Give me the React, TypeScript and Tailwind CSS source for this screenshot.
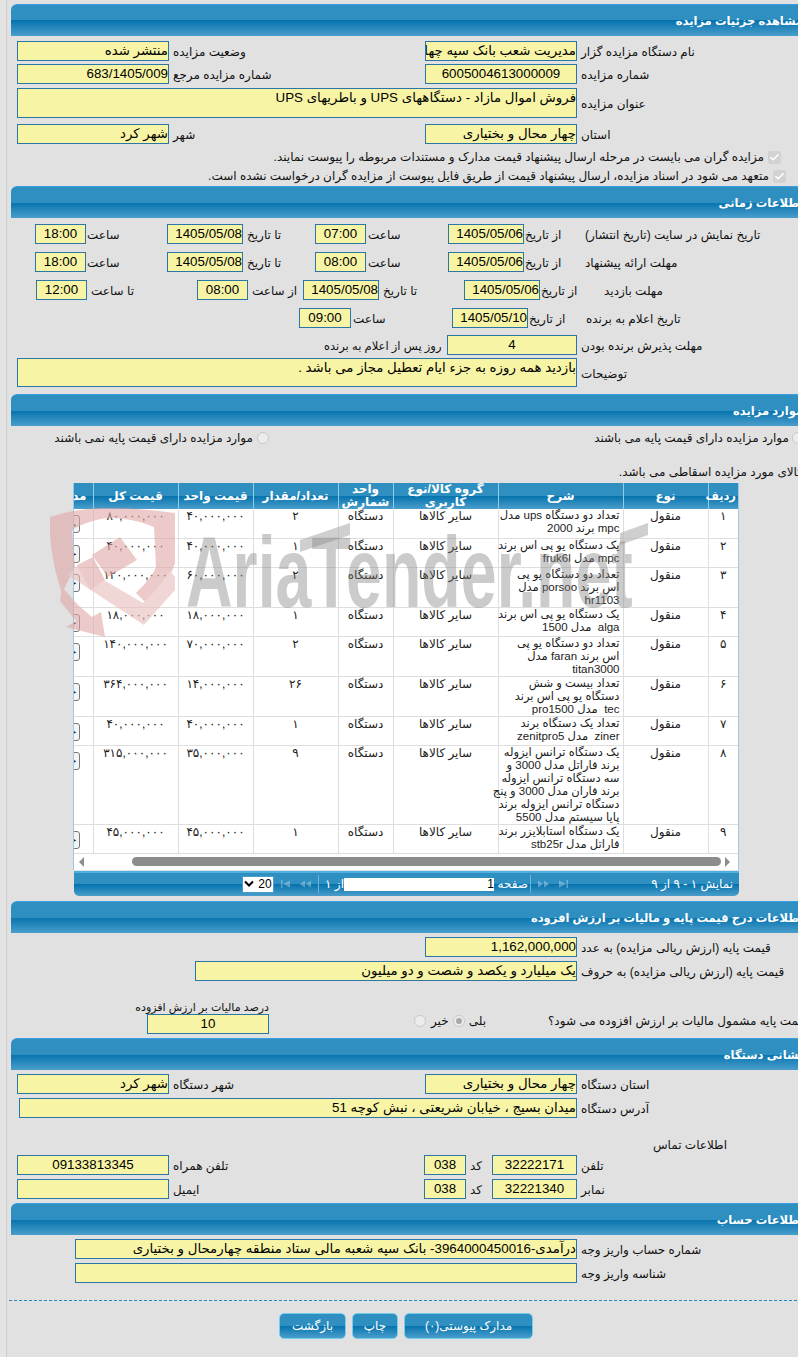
import { Check } from "lucide-react";
import type { ReactNode } from "react";

const barBg = "bg-[linear-gradient(#2f8fc1_0%,#2f8fc1_50%,#0673ae_50%,#4a9ecb_100%)]";

interface ItemRow {
  no: string;
  desc: string[];
  qty: string;
  unitPrice: string;
  total: string;
  height: string;
}

const items: ItemRow[] = [
  { no: "۱", desc: ["تعداد دو دستگاه ups مدل", "mpc برند 2000"], qty: "۲", unitPrice: "۴۰,۰۰۰,۰۰۰", total: "۸۰,۰۰۰,۰۰۰", height: "h-[29px]" },
  { no: "۲", desc: ["یک دستگاه یو پی اس برند", "mpc مدل fruk6l"], qty: "۱", unitPrice: "۴۰,۰۰۰,۰۰۰", total: "۴۰,۰۰۰,۰۰۰", height: "h-[29px]" },
  { no: "۳", desc: ["تعداد دو دستگاه یو پی", "اس برند porsoo مدل", "hr1103"], qty: "۲", unitPrice: "۶۰,۰۰۰,۰۰۰", total: "۱۲۰,۰۰۰,۰۰۰", height: "h-[40px]" },
  { no: "۴", desc: ["یک دستگاه یو پی اس برند", "alga  مدل 1500"], qty: "۱", unitPrice: "۱۸,۰۰۰,۰۰۰", total: "۱۸,۰۰۰,۰۰۰", height: "h-[29px]" },
  { no: "۵", desc: ["تعداد دو دستگاه یو پی", "اس برند faran مدل", "titan3000"], qty: "۲", unitPrice: "۷۰,۰۰۰,۰۰۰", total: "۱۴۰,۰۰۰,۰۰۰", height: "h-[40px]" },
  { no: "۶", desc: ["تعداد بیست و شش", "دستگاه یو پی اس برند", "tec  مدل pro1500"], qty: "۲۶", unitPrice: "۱۴,۰۰۰,۰۰۰", total: "۳۶۴,۰۰۰,۰۰۰", height: "h-[40px]" },
  { no: "۷", desc: ["تعداد یک دستگاه برند", "ziner  مدل zenitpro5"], qty: "۱", unitPrice: "۴۰,۰۰۰,۰۰۰", total: "۴۰,۰۰۰,۰۰۰", height: "h-[29px]" },
  {
    no: "۸",
    desc: [
      "یک دستگاه ترانس ایزوله",
      "برند فاراتل مدل 3000 و",
      "سه دستگاه ترانس ایزوله",
      "برند فاران مدل 3000 و پنج",
      "دستگاه ترانس ایزوله برند",
      "پایا سیستم مدل 5500",
    ],
    qty: "۹",
    unitPrice: "۳۵,۰۰۰,۰۰۰",
    total: "۳۱۵,۰۰۰,۰۰۰",
    height: "h-[79px]",
  },
  { no: "۹", desc: ["یک دستگاه استابلایزر برند", "فاراتل مدل stb25r"], qty: "۱", unitPrice: "۴۵,۰۰۰,۰۰۰", total: "۴۵,۰۰۰,۰۰۰", height: "h-[29px]" },
];

function SectionBar({ title }: { title: string }) {
  return (
    <div
      dir="rtl"
      className={`ml-[4px] h-[32px] shrink-0 rounded-t-[6px] border-t border-[#3b9ee0] ${barBg} flex items-center pr-[24px] pt-[3px] text-[11.5px] font-bold text-white`}
    >
      {title}
    </div>
  );
}

function Field({ children, className, center }: { children?: ReactNode; className: string; center?: boolean }) {
  return (
    <div
      dir="rtl"
      className={`h-[20px] shrink-0 overflow-hidden whitespace-nowrap border border-[#2a76a6] bg-[#f7f5a5] text-[13.33px] leading-[18px] text-black ${center ? "text-center" : "text-right"} ${className}`}
    >
      {children}
    </div>
  );
}

function Label({ children, className }: { children: ReactNode; className: string }) {
  return (
    <div dir="rtl" className={`h-[20px] shrink-0 whitespace-nowrap pl-[4px] pt-[2px] text-left text-[12px] leading-[18px] text-[#111] ${className}`}>
      {children}
    </div>
  );
}

function Radio({ checked }: { checked?: boolean }) {
  return (
    <span className="flex h-[12px] w-[12px] shrink-0 items-center justify-center rounded-full border border-[#c9c9c9] bg-[#ececec]">
      {checked && <span className="h-[6px] w-[6px] rounded-full bg-[#a8a8a8]" />}
    </span>
  );
}

function DisabledCheck() {
  return (
    <span className="flex h-[13px] w-[13px] shrink-0 items-center justify-center rounded-[2px] bg-[#d2d2d2]">
      <Check className="h-[11px] w-[11px] text-white" strokeWidth={3.5} />
    </span>
  );
}

function PagerIcon({ flip, double }: { flip?: boolean; double?: boolean }) {
  return (
    <svg width="12" height="8" viewBox="0 0 12 8" className={`shrink-0 opacity-40 ${flip ? "-scale-x-100" : ""}`}>
      {double ? (
        <path d="M0 4l5-3.5v7zM6 4l5-3.5v7z" fill="#cfe6f3" />
      ) : (
        <path d="M1 0h1.5v8H1zM3 4l7-3.5v7z" fill="#cfe6f3" />
      )}
    </svg>
  );
}

function Watermark() {
  return (
    <div className="pointer-events-none absolute left-[48px] top-[505px] h-[140px] w-[610px]">
      <svg width="610" height="140" viewBox="0 0 610 140" className="absolute left-0 top-0 opacity-60">
        {/* shield band */}
        <path
          d="M2 12C20 6 40 3 61 3C84 3 106 5 127 8L127 58C122 74 112 88 100 100L88 88C98 78 105 70 108 62L106 22C92 16 76 13 61 13C48 14 36 18 24 25L27 62L14 88C8 70 3 50 2 28Z"
          fill="#e2a8a8"
        />
        {/* arrow */}
        <path d="M14 82L30 100L44 112L53 107L57 132L18 122L28 116L12 96Z" fill="#e2a8a8" />
        {/* check */}
        <path d="M20 70L30 60L95 98L108 85L122 66L127 72L127 85L96 120Z" fill="#e8bcbc" />
        {/* fist blocks */}
        <path d="M29 60L45 52L57 75L42 85Z" fill="#e2a8a8" />
        <path d="M44 50L72 32L89 55L60 72Z" fill="#e2a8a8" />
        {/* slanted tops of the two T letters */}
        <path d="M252 35L302 18L302 30L252 47Z" fill="#b0b0b0" />
        <path d="M572 28L600 18L600 30L572 40Z" fill="#b0b0b0" />
      </svg>
      <div className="absolute left-[138px] top-[12px] origin-left scale-x-[0.645] whitespace-nowrap text-[100px] font-bold leading-[110px] text-[#808080] opacity-40">
        AriaTender.net
      </div>
    </div>
  );
}

function ItemsGrid() {
  const th = "border-l border-[#8fcbea] px-[2px] text-center align-middle text-[12px] font-bold leading-[13px] text-white";
  const td = "border-b border-l border-[#dedede] px-[2px] pt-[1px] text-center align-top text-[12px] leading-[13px] text-[#222]";
  return (
    <div className="ml-[66px] w-[666px] shrink-0 border-x border-[#9cc8e8] bg-white">
      <div dir="rtl" className="overflow-hidden">
        <table className="w-[725px] table-fixed border-collapse">
          <colgroup>
            <col className="w-[30px]" />
            <col className="w-[85px]" />
            <col className="w-[125px]" />
            <col className="w-[105px]" />
            <col className="w-[55px]" />
            <col className="w-[85px]" />
            <col className="w-[75px]" />
            <col className="w-[85px]" />
            <col className="w-[80px]" />
          </colgroup>
          <thead>
            <tr className={`h-[26px] ${barBg}`}>
              <th className={`${th} !text-[11.5px]`}>ردیف</th>
              <th className={th}>نوع</th>
              <th className={th}>شرح</th>
              <th className={th}>گروه کالا/نوع کاربری</th>
              <th className={th}>واحد شمارش</th>
              <th className={th}>تعداد/مقدار</th>
              <th className={th}>قیمت واحد</th>
              <th className={th}>قیمت کل</th>
              <th className={`${th} pr-[6px] text-right`}>مدارک</th>
            </tr>
          </thead>
          <tbody>
            {items.map((item) => (
              <tr key={item.no} className={item.height}>
                <td className={td}>{item.no}</td>
                <td className={td}>منقول</td>
                <td className={`${td} !pt-0 pr-[3px] text-right !text-[11.5px]`}>
                  {item.desc.map((line, i) => (
                    <div key={i} className="whitespace-pre">
                      {line}
                    </div>
                  ))}
                </td>
                <td className={td}>سایر کالاها</td>
                <td className={td}>دستگاه</td>
                <td className={td}>{item.qty}</td>
                <td className={td}>{item.unitPrice}</td>
                <td className={td}>{item.total}</td>
                <td className={`${td} pr-[13px]`}>
                  <button className="mt-[5px] block h-[18px] w-[60px] rounded-[3px] border border-[#777] bg-[#f4f4f4] text-right text-[11px] leading-[15px] text-[#222]">
                    <span className="pr-[2px]">جزئیات</span>
                  </button>
                </td>
              </tr>
            ))}
          </tbody>
        </table>
      </div>
      <div className="flex h-[16px] items-center bg-white pl-[5px]">
        <span className="h-0 w-0 border-y-[5px] border-r-[5px] border-y-transparent border-r-[#8c8c8c]" />
        <span className="ml-[48px] h-[9px] w-[589px] rounded-full bg-[#8c8c8c]" />
        <span className="ml-[4px] h-0 w-0 border-y-[5px] border-l-[5px] border-y-transparent border-l-[#8c8c8c]" />
      </div>
    </div>
  );
}

function Pager() {
  return (
    <div className={`ml-[67px] mt-[1px] flex h-[25px] w-[665px] shrink-0 items-center rounded-b-[5px] border-t-2 border-[#4fb0e0] ${barBg} text-[12px] text-white`}>
      <div className="ml-[168px] flex h-[17px] w-[32px] items-center justify-center gap-[4px] border border-[#4a9ecb] bg-white text-[12px] text-black">
        <svg width="10" height="8" viewBox="0 0 10 8" className="shrink-0">
          <path d="M1 1.5l4 4 4-4" fill="none" stroke="#000" strokeWidth="2" />
        </svg>
        <span>20</span>
      </div>
      <div className="ml-[6px] flex items-center gap-[8px]">
        <PagerIcon />
        <PagerIcon double />
      </div>
      <span className="ml-[6px] h-[18px] w-px bg-[#6fb3d6]" />
      <span dir="rtl" className="ml-[5px] w-[20px] whitespace-nowrap">
        از ۱
      </span>
      <div className="h-[13px] w-[150px] bg-white text-right text-[12px] leading-[13px] text-black">1</div>
      <span dir="rtl" className="ml-[4px] w-[30px] whitespace-nowrap">
        صفحه
      </span>
      <span className="ml-[2px] h-[18px] w-px bg-[#6fb3d6]" />
      <div className="ml-[6px] flex items-center gap-[8px]">
        <PagerIcon double flip />
        <PagerIcon flip />
      </div>
      <span dir="rtl" className="ml-auto mr-[6px] whitespace-nowrap">
        نمایش ۱ - ۹ از ۹
      </span>
    </div>
  );
}

function BarButton({ children, className }: { children: ReactNode; className: string }) {
  return (
    <button dir="rtl" className={`h-[26px] shrink-0 rounded-[5px] border border-[#75cdee] ${barBg} text-[12px] text-white ${className}`}>
      {children}
    </button>
  );
}

export default function App() {
  return (
    <div className="relative h-[1357px] w-[798px] overflow-hidden bg-[#e4e4e4] [font-family:'Liberation_Sans','DejaVu_Sans',sans-serif]">
      <div className="ml-[6px] flex h-full w-[821px] flex-col border-l border-[#cdcdcd] bg-[#e1e1e1] pt-[4px]">
        <SectionBar title="مشاهده جزئیات مزایده" />

        <div className="mt-[5px] flex">
          <Field className="ml-[10px] w-[152px]">منتشر شده</Field>
          <Label className="w-[256px]">وضعیت مزایده</Label>
          <Field className="w-[152px]">مدیریت شعب بانک سپه چهارمحال و بختیاری</Field>
          <Label className="w-[200px]">نام دستگاه مزایده گزار</Label>
        </div>
        <div className="mt-[3px] flex">
          <Field className="ml-[10px] w-[152px]">683/1405/009</Field>
          <Label className="w-[256px]">شماره مزایده مرجع</Label>
          <Field center className="w-[152px]">6005004613000009</Field>
          <Label className="w-[200px]">شماره مزایده</Label>
        </div>
        <div className="mt-[4px] flex">
          <Field className="ml-[10px] !h-[30px] w-[560px]">فروش اموال مازاد - دستگاههای UPS و باطریهای UPS</Field>
          <Label className="w-[200px] pt-[7px]">عنوان مزایده</Label>
        </div>
        <div className="mt-[6px] flex">
          <Field className="ml-[10px] w-[152px]">شهر کرد</Field>
          <Label className="w-[256px]">شهر</Label>
          <Field className="w-[152px]">چهار محال و بختیاری</Field>
          <Label className="w-[200px]">استان</Label>
        </div>
        <div dir="rtl" className="mt-[4px] flex h-[18px] items-center gap-[4px] pr-[46px] text-[12px] text-[#111]">
          <DisabledCheck />
          <span className="whitespace-nowrap">مزایده گران می بایست در مرحله ارسال پیشنهاد قیمت مدارک و مستندات مربوطه را پیوست نمایند.</span>
        </div>
        <div dir="rtl" className="mt-[1px] flex h-[18px] items-center gap-[4px] pr-[41px] text-[12px] text-[#111]">
          <DisabledCheck />
          <span className="whitespace-nowrap">متعهد می شود در اسناد مزایده، ارسال پیشنهاد قیمت از طریق فایل پیوست از مزایده گران درخواست نشده است.</span>
        </div>

        <div className="mt-[1px]">
          <SectionBar title="اطلاعات زمانی" />
        </div>
        <div className="mt-[6px] flex">
          <Field center className="ml-[28px] w-[51px]">18:00</Field>
          <Label className="w-[81px] !pl-[1px]">ساعت</Label>
          <Field className="w-[76px]">1405/05/08</Field>
          <Label className="w-[72px]">تا تاریخ</Label>
          <Field center className="w-[51px]">07:00</Field>
          <Label className="w-[82px] !pl-[2px]">ساعت</Label>
          <Field className="w-[76px]">1405/05/06</Field>
          <Label className="w-[57px] !pl-[1px]">از تاریخ</Label>
          <Label className="w-[200px]">تاریخ نمایش در سایت (تاریخ انتشار)</Label>
        </div>
        <div className="mt-[8px] flex">
          <Field center className="ml-[28px] w-[51px]">18:00</Field>
          <Label className="w-[81px] !pl-[1px]">ساعت</Label>
          <Field className="w-[76px]">1405/05/08</Field>
          <Label className="w-[72px]">تا تاریخ</Label>
          <Field center className="w-[51px]">08:00</Field>
          <Label className="w-[82px] !pl-[2px]">ساعت</Label>
          <Field className="w-[76px]">1405/05/06</Field>
          <Label className="w-[57px] !pl-[1px]">از تاریخ</Label>
          <Label className="w-[200px]">مهلت ارائه پیشنهاد</Label>
        </div>
        <div className="mt-[8px] flex">
          <Field center className="ml-[29px] w-[51px]">12:00</Field>
          <Label className="w-[110px]">تا ساعت</Label>
          <Field center className="w-[51px]">08:00</Field>
          <Label className="w-[55px]">از ساعت</Label>
          <Field className="w-[76px]">1405/05/08</Field>
          <Label className="w-[85px]">تا تاریخ</Label>
          <Field className="w-[76px]">1405/05/06</Field>
          <Label className="w-[60px] !pl-[1px]">از تاریخ</Label>
          <Label className="w-[200px]">مهلت بازدید</Label>
        </div>
        <div className="mt-[8px] flex">
          <Field center className="ml-[292px] w-[52px]">09:00</Field>
          <Label className="w-[101px] !pl-[2px]">ساعت</Label>
          <Field className="w-[76px]">1405/05/10</Field>
          <Label className="w-[54px] !pl-[1px]">از تاریخ</Label>
          <Label className="w-[200px]">تاریخ اعلام به برنده</Label>
        </div>
        <div className="mt-[7px] flex">
          <Label className="ml-[313px] w-[127px] !text-[11.5px]">روز پس از اعلام به برنده</Label>
          <Field center className="w-[130px]">4</Field>
          <Label className="w-[200px]">مهلت پذیرش برنده بودن</Label>
        </div>
        <div className="mt-[3px] flex">
          <Field className="ml-[10px] !h-[29px] w-[560px]">بازدید همه روزه به جزء ایام تعطیل مجاز می باشد .</Field>
          <Label className="w-[200px] pt-[7px]">توضیحات</Label>
        </div>

        <div className="mt-[7px]">
          <SectionBar title="موارد مزایده" />
        </div>
        <div className="mt-[2px] flex h-[20px] items-center">
          <div dir="rtl" className="ml-[48px] flex w-[214px] items-center gap-[4px] text-[12px] text-[#111]">
            <Radio />
            <span className="whitespace-nowrap">موارد مزایده دارای قیمت پایه نمی باشند</span>
          </div>
          <div dir="rtl" className="ml-[323px] flex w-[212px] items-center gap-[3px] text-[12px] text-[#111]">
            <Radio />
            <span className="whitespace-nowrap">موارد مزایده دارای قیمت پایه می باشند</span>
          </div>
        </div>
        <div dir="rtl" className="mt-[14px] h-[20px] whitespace-nowrap pr-[24px] text-[12px] leading-[20px] text-[#111]">
          کالای مورد مزایده اسقاطی می باشد.
        </div>

        <div className="mt-[1px]">
          <ItemsGrid />
          <Pager />
        </div>

        <div className="mt-[5px]">
          <SectionBar title="اطلاعات درج قیمت پایه و مالیات بر ارزش افزوده" />
        </div>
        <div className="mt-[4px] flex">
          <Field className="ml-[418px] w-[152px]">1,162,000,000</Field>
          <Label className="w-[240px]">قیمت پایه (ارزش ریالی مزایده) به عدد</Label>
        </div>
        <div className="mt-[4px] flex">
          <Field className="ml-[188px] w-[382px]">یک میلیارد و یکصد و شصت و دو میلیون</Field>
          <Label className="w-[240px]">قیمت پایه (ارزش ریالی مزایده) به حروف</Label>
        </div>
        <div className="mt-[19px] flex h-[34px] items-end">
          <div dir="rtl" className="ml-[140px] flex w-[122px] shrink-0 flex-col items-start">
            <span className="h-[14px] whitespace-nowrap text-[11px] leading-[14px] text-[#111]">درصد مالیات بر ارزش افزوده</span>
            <Field center className="w-[122px]">10</Field>
          </div>
          <div className="ml-[145px] flex h-[26px] w-[90px] shrink-0 items-center text-[12px] text-[#111]">
            <Radio />
            <span className="ml-[5px]">خیر</span>
            <span className="ml-[4px]">
              <Radio checked />
            </span>
            <span className="ml-[4px]">بلی</span>
          </div>
          <div dir="rtl" className="ml-[44px] h-[26px] w-[290px] shrink-0 whitespace-nowrap text-left text-[12px] leading-[26px] text-[#111]">
            قیمت پایه مشمول مالیات بر ارزش افزوده می شود؟
          </div>
        </div>

        <div className="mt-[4px]">
          <SectionBar title="نشانی دستگاه" />
        </div>
        <div className="mt-[4px] flex">
          <Field className="ml-[10px] w-[152px]">شهر کرد</Field>
          <Label className="w-[256px]">شهر دستگاه</Label>
          <Field className="w-[152px]">چهار محال و بختیاری</Field>
          <Label className="w-[200px]">استان دستگاه</Label>
        </div>
        <div className="mt-[4px] flex">
          <Field className="ml-[12px] w-[558px]">میدان بسیج ، خیابان شریعتی ، نبش کوچه 51</Field>
          <Label className="w-[200px]">آدرس دستگاه</Label>
        </div>
        <div dir="rtl" className="mt-[18px] h-[18px] whitespace-nowrap pr-[100px] text-[12px] leading-[18px] text-[#111]">
          اطلاعات تماس
        </div>
        <div className="mt-[1px] flex">
          <Field center className="ml-[10px] w-[152px]">09133813345</Field>
          <Label className="w-[255px]">تلفن همراه</Label>
          <Field center className="w-[42px]">038</Field>
          <Label className="w-[26px]">کد</Label>
          <Field center className="w-[85px]">32222171</Field>
          <Label className="w-[200px]">تلفن</Label>
        </div>
        <div className="mt-[4px] flex">
          <Field className="ml-[10px] w-[152px]" />
          <Label className="w-[255px]">ایمیل</Label>
          <Field center className="w-[42px]">038</Field>
          <Label className="w-[26px]">کد</Label>
          <Field center className="w-[85px]">32221340</Field>
          <Label className="w-[200px]">نمابر</Label>
        </div>

        <div className="mt-[4px]">
          <SectionBar title="اطلاعات حساب" />
        </div>
        <div className="mt-[4px] flex">
          <Field className="ml-[68px] w-[502px]">درآمدی-3964000450016- بانک سپه شعبه مالی ستاد منطقه چهارمحال و بختیاری</Field>
          <Label className="w-[200px]">شماره حساب واریز وجه</Label>
        </div>
        <div className="mt-[4px] flex">
          <Field className="ml-[68px] w-[502px]" />
          <Label className="w-[200px]">شناسه واریز وجه</Label>
        </div>

        <div className="ml-[2px] mt-[17px] border-t border-dashed border-[#2a86b8]" />
        <div className="ml-[272px] mt-[12px] flex gap-[6px]">
          <BarButton className="w-[67px]">بازگشت</BarButton>
          <BarButton className="w-[46px]">چاپ</BarButton>
          <BarButton className="w-[129px]">مدارک پیوستی(۰)</BarButton>
        </div>
      </div>
      <Watermark />
    </div>
  );
}
